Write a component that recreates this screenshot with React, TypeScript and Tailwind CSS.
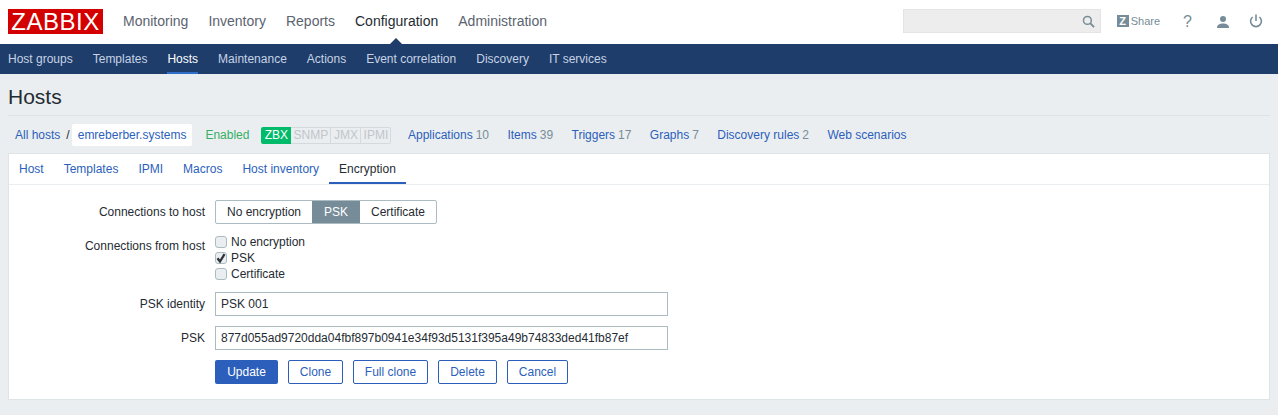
import React from 'react';

const topMenu = ['Monitoring', 'Inventory', 'Reports', 'Configuration', 'Administration'];
const subMenu = ['Host groups', 'Templates', 'Hosts', 'Maintenance', 'Actions', 'Event correlation', 'Discovery', 'IT services'];
const hostLinks = [
  { label: 'Applications', count: '10' },
  { label: 'Items', count: '39' },
  { label: 'Triggers', count: '17' },
  { label: 'Graphs', count: '7' },
  { label: 'Discovery rules', count: '2' },
  { label: 'Web scenarios', count: '' },
];
const tabs = ['Host', 'Templates', 'IPMI', 'Macros', 'Host inventory', 'Encryption'];

const Checkbox = ({ label, checked }: { label: string; checked?: boolean }) => (
  <div className="flex h-4 items-center gap-1">
    <span className="flex h-3 w-3 items-center justify-center rounded-[3px] border border-[#acbbc2] bg-[#ebeef0]">
      {checked && (
        <svg viewBox="0 0 12 12" className="h-3 w-3 shrink-0">
          <path d="M2.5 6.2 L5 9.5 L9.5 2.2" fill="none" stroke="#2f3438" strokeWidth="2.3" />
        </svg>
      )}
    </span>
    <span>{label}</span>
  </div>
);

const FormRow = ({ label, children, className }: { label: string; children: React.ReactNode; className?: string }) => (
  <div className={`flex ${className ?? ''}`}>
    <div className="w-[206px] pr-[10px] text-right">{label}</div>
    <div>{children}</div>
  </div>
);

const TextBox = ({ value }: { value: string }) => (
  <div className="flex h-6 w-[453px] items-center border border-[#acbbc2] bg-white px-[5px]">{value}</div>
);

const OutlineButton = ({ label, className }: { label: string; className: string }) => (
  <button className={`h-6 rounded-[2px] border border-[#2b5fbb] bg-white text-[#2b5fbb] ${className}`}>{label}</button>
);

export default function App() {
  return (
    <div className="h-[415px] w-[1278px] overflow-hidden bg-[#ebeef0] font-['Liberation_Sans',Arial,sans-serif] text-[12px] text-[#1f2c33]">
      {/* top header */}
      <header className="flex h-[44px] items-center bg-white pb-[2px] pl-[8px] pr-[15px]">
        <div className="mt-[1px] flex h-[25px] w-[95px] items-center justify-center bg-[#d40000] text-[24px] leading-none tracking-[0.5px] text-white">
          ZABBIX
        </div>
        <nav className="ml-[20px] flex gap-[20px] text-[14px] text-[#5c6370]">
          {topMenu.map((item) => (
            <span key={item} className={item === 'Configuration' ? 'text-[#1f2c33]' : ''}>
              {item}
            </span>
          ))}
        </nav>
        <div className="ml-auto flex h-6 w-[198px] items-center justify-end border border-[#e4e4e4] bg-[#ededed] pr-[5px]">
          <svg viewBox="0 0 14 14" className="h-[13px] w-[13px]" fill="none" stroke="#768d99" strokeWidth="1.6">
            <circle cx="5.8" cy="5.8" r="4.2" />
            <path d="M8.8 8.8 L13 13" strokeWidth="2" />
          </svg>
        </div>
        <div className="ml-[16px] flex items-center text-[#768d99]">
          <span className="flex h-3 w-3 items-center justify-center bg-[#768d99] text-[11px] font-bold leading-none text-white">Z</span>
          <span className="ml-[2px] text-[11px]">Share</span>
        </div>
        <span className="ml-[23px] mt-[2px] text-[16px] leading-none text-[#768d99]">?</span>
        <svg viewBox="0 0 14 14" className="ml-[24px] mt-[2px] h-[14px] w-[14px]" fill="#768d99">
          <circle cx="7" cy="4" r="3" />
          <path d="M1 13 C1 9.5 4 8.6 7 8.6 C10 8.6 13 9.5 13 13 Z" />
        </svg>
        <svg viewBox="0 0 14 14" className="ml-[19px] h-[14px] w-[14px]" fill="none" stroke="#768d99" strokeWidth="1.6">
          <path d="M7 0.5 V7" />
          <path d="M3.6 3 A5.4 5.4 0 1 0 10.4 3" />
        </svg>
      </header>

      {/* sub menu */}
      <nav className="relative flex h-[30px] items-stretch gap-[20px] bg-[#1e3d6b] px-[8px] text-[#c6d3e4]">
        <span className="absolute left-[390px] top-[-6px] h-0 w-0 border-x-[6px] border-b-[6px] border-x-transparent border-b-[#1e3d6b]" />
        {subMenu.map((item) => (
          <span
            key={item}
            className={`flex items-center ${item === 'Hosts' ? 'border-b-2 border-[#2f6fc9] pt-[2px] text-white' : ''}`}
          >
            {item}
          </span>
        ))}
      </nav>

      <main className="px-[8px]">
        <h1 className="flex h-[42px] items-center border-b border-[#dfe3e6] pt-[3px] text-[21px] leading-none text-[#1f2c33]">Hosts</h1>

        {/* host breadcrumbs */}
        <div className="mt-[8px] flex h-[22px] items-center pl-[7px] text-[#2b5fbb]">
          <span>All hosts</span>
          <span className="ml-[6px] text-[#1f2c33]">/</span>
          <span className="ml-[2px] flex h-[22px] items-center rounded-[2px] bg-white px-[6px]">emreberber.systems</span>
          <span className="ml-[13px] text-[#34af67]">Enabled</span>
          <div className="ml-[12px] flex h-[17px] items-stretch text-[#c0c6ca]">
            <span className="flex w-[30px] items-center justify-center rounded-l-[2px] bg-[#00bc6a] text-white">ZBX</span>
            <span className="flex w-[40px] items-center justify-center border-y border-r border-[#d4d9dc]">SNMP</span>
            <span className="flex w-[30px] items-center justify-center border-y border-r border-[#d4d9dc]">JMX</span>
            <span className="flex w-[30px] items-center justify-center rounded-r-[2px] border-y border-r border-[#d4d9dc]">IPMI</span>
          </div>
          <div className="ml-[16.5px] flex gap-[18.4px]">
            {hostLinks.map((link) => (
              <span key={link.label}>
                {link.label}
                {link.count && <span className="ml-[3px] text-[#768d99]">{link.count}</span>}
              </span>
            ))}
          </div>
        </div>

        {/* form panel */}
        <section className="mt-[7px] h-[247px] border border-[#dfe4e7] bg-white">
          <div className="flex h-[31px] border-b border-[#ebeef0] text-[#2b5fbb]">
            {tabs.map((tab) => (
              <span
                key={tab}
                className={`flex items-center px-[10px] ${tab === 'Encryption' ? 'border-b-2 border-[#2b5fbb] pt-[2px] text-[#1f2c33]' : ''}`}
              >
                {tab}
              </span>
            ))}
          </div>

          <div className="pt-[15px]">
            <FormRow label="Connections to host" className="items-center">
              <div className="flex h-6 w-[222px] overflow-hidden rounded-[2px] border border-[#acbbc2]">
                <span className="flex w-[96px] items-center justify-center">No encryption</span>
                <span className="flex w-[48px] items-center justify-center bg-[#768d99] text-white">PSK</span>
                <span className="flex flex-1 items-center justify-center">Certificate</span>
              </div>
            </FormRow>

            <FormRow label="Connections from host" className="mt-[13px]">
              <div className="-mt-[3px]">
                <Checkbox label="No encryption" />
                <Checkbox label="PSK" checked />
                <Checkbox label="Certificate" />
              </div>
            </FormRow>

            <FormRow label="PSK identity" className="mt-[10px] items-center">
              <TextBox value="PSK 001" />
            </FormRow>
            <FormRow label="PSK" className="mt-[10px] items-center">
              <TextBox value="877d055ad9720dda04fbf897b0941e34f93d5131f395a49b74833ded41fb87ef" />
            </FormRow>

            <div className="ml-[206px] mt-[10px] flex gap-[10px]">
              <button className="h-6 w-[63px] rounded-[2px] bg-[#2b5fbb] text-white">Update</button>
              <OutlineButton label="Clone" className="w-[55px]" />
              <OutlineButton label="Full clone" className="w-[75px]" />
              <OutlineButton label="Delete" className="w-[59px]" />
              <OutlineButton label="Cancel" className="w-[61px]" />
            </div>
          </div>
        </section>
      </main>
    </div>
  );
}
